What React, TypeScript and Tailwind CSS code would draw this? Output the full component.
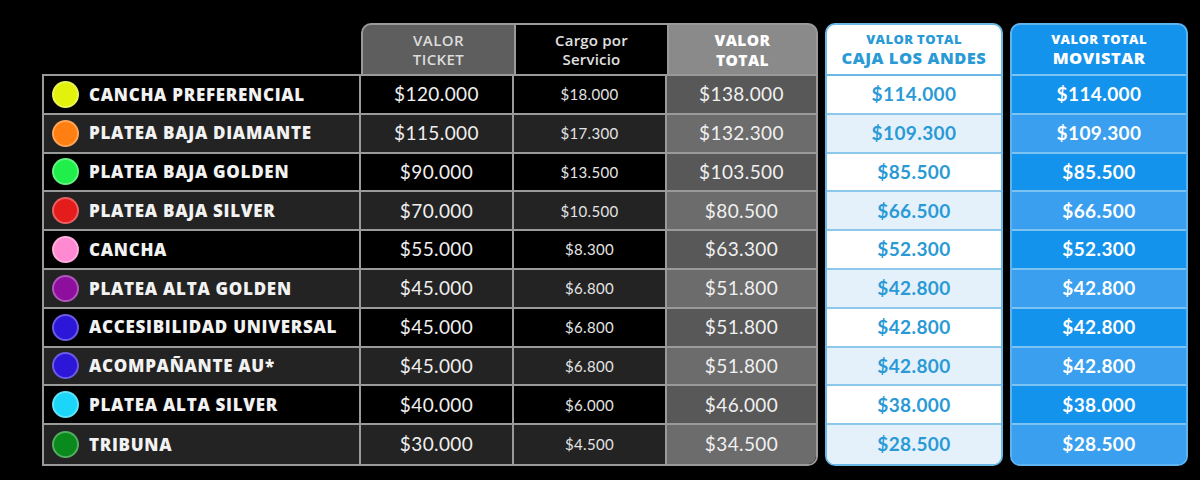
const rows = [
	{ name: "CANCHA PREFERENCIAL", dot: "#e2f20c", ticket: "$120.000", cargo: "$18.000", total: "$138.000", caja: "$114.000" },
	{ name: "PLATEA BAJA DIAMANTE", dot: "#ff7f12", ticket: "$115.000", cargo: "$17.300", total: "$132.300", caja: "$109.300" },
	{ name: "PLATEA BAJA GOLDEN", dot: "#20ee4a", ticket: "$90.000", cargo: "$13.500", total: "$103.500", caja: "$85.500" },
	{ name: "PLATEA BAJA SILVER", dot: "#e41c1c", ticket: "$70.000", cargo: "$10.500", total: "$80.500", caja: "$66.500" },
	{ name: "CANCHA", dot: "#ff8ad2", ticket: "$55.000", cargo: "$8.300", total: "$63.300", caja: "$52.300" },
	{ name: "PLATEA ALTA GOLDEN", dot: "#8e0f9e", ticket: "$45.000", cargo: "$6.800", total: "$51.800", caja: "$42.800" },
	{ name: "ACCESIBILIDAD UNIVERSAL", dot: "#2c16d8", ticket: "$45.000", cargo: "$6.800", total: "$51.800", caja: "$42.800" },
	{ name: "ACOMPAÑANTE AU*", dot: "#2c16d8", ticket: "$45.000", cargo: "$6.800", total: "$51.800", caja: "$42.800" },
	{ name: "PLATEA ALTA SILVER", dot: "#1cd6fa", ticket: "$40.000", cargo: "$6.000", total: "$46.000", caja: "$38.000" },
	{ name: "TRIBUNA", dot: "#0a8a1c", ticket: "$30.000", cargo: "$4.500", total: "$34.500", caja: "$28.500" },
];

const label = { fontFamily: '"Open Sans", "Liberation Sans", sans-serif' };
const price = { fontFamily: 'Lato, "Open Sans", sans-serif' };

export default function App() {
	return (
		<div className="flex h-[480px] w-[1200px] items-start gap-[7px] bg-black pl-[42px] pt-[23px]">
			{/* main table */}
			<div className="flex w-[776px] flex-col">
				<div className="flex h-[53px]">
					<div className="w-[319px] border-b-2 border-[#9a9a9a]" />
					<div
						className="flex w-[153px] flex-col items-center justify-center rounded-tl-[10px] border-2 border-r-0 border-[#9a9a9a] bg-[#5e5e5e] text-[15px] leading-[19px] font-semibold tracking-[0.4px] text-[#dcdcdc]"
						style={label}
					>
						<span>VALOR</span>
						<span>TICKET</span>
					</div>
					<div
						className="flex w-[153px] flex-col items-center justify-center border-2 border-r-0 border-[#9a9a9a] bg-black text-[15px] leading-[19px] font-semibold tracking-[0.2px] text-[#e0e0e0]"
						style={label}
					>
						<span>Cargo por</span>
						<span>Servicio</span>
					</div>
					<div
						className="flex w-[151px] flex-col items-center justify-center rounded-tr-[10px] border-2 border-[#9a9a9a] bg-[#8a8a8a] text-[15.5px] leading-[20px] font-extrabold tracking-[0.4px] text-white"
						style={label}
					>
						<span>VALOR</span>
						<span>TOTAL</span>
					</div>
				</div>
				<div className="flex flex-col overflow-hidden rounded-br-[10px] border-2 border-t-0 border-[#9a9a9a]">
					{rows.map((r, i) => {
						const odd = i % 2 === 1;
						return (
							<div
								key={i}
								className={`flex h-[38.8px] ${i < rows.length - 1 ? "border-b-2 border-[#9a9a9a]" : ""} ${odd ? "bg-[#232323]" : "bg-black"}`}
							>
								<div className="flex w-[317px] items-center gap-[10px] border-r-2 border-[#9a9a9a] pl-[8px]">
									<span
										className="h-[27px] w-[27px] shrink-0 rounded-full border-2 border-white/30"
										style={{ backgroundColor: r.dot }}
									/>
									<span className="text-[17px] font-extrabold tracking-[0.7px] text-[#f2f2f2]" style={label}>
										{r.name}
									</span>
								</div>
								<div
									className="flex w-[153px] items-center justify-center border-r-2 border-[#9a9a9a] text-[19px] tracking-[0.4px] text-[#efefef]"
									style={price}
								>
									{r.ticket}
								</div>
								<div
									className="flex w-[153px] items-center justify-center border-r-2 border-[#9a9a9a] text-[15px] tracking-[0.3px] text-[#e4e4e4]"
									style={price}
								>
									{r.cargo}
								</div>
								<div
									className={`flex flex-1 items-center justify-center text-[19px] tracking-[0.4px] text-[#f0f0f0] ${odd ? "bg-[#6c6c6c]" : "bg-[#585858]"}`}
									style={price}
								>
									{r.total}
								</div>
							</div>
						);
					})}
				</div>
			</div>

			{/* caja los andes */}
			<div className="flex w-[178px] flex-col overflow-hidden rounded-[10px] border-2 border-[#6ab8e6] bg-white">
				<div
					className="flex h-[51px] flex-col items-center justify-center border-b-2 border-[#6ab8e6] font-extrabold text-[#2a9ad6]"
					style={label}
				>
					<span className="text-[13px] leading-[17px] tracking-[0.4px]">VALOR TOTAL</span>
					<span className="text-[16.5px] leading-[20px] tracking-[0.5px]">CAJA LOS ANDES</span>
				</div>
				{rows.map((r, i) => (
					<div
						key={i}
						className={`flex h-[38.8px] items-center justify-center text-[19px] font-bold tracking-[0.4px] text-[#2a9ad6] ${i < rows.length - 1 ? "border-b-2 border-[#8cc8ec]" : ""} ${i % 2 === 1 ? "bg-[#e4f1fb]" : "bg-white"}`}
						style={price}
					>
						{r.caja}
					</div>
				))}
			</div>

			{/* movistar */}
			<div className="flex w-[178px] flex-col overflow-hidden rounded-[10px] border-2 border-[#5fb4f0] bg-[#1493ec]">
				<div
					className="flex h-[51px] flex-col items-center justify-center border-b-2 border-[#7cc2f2] font-extrabold text-white"
					style={label}
				>
					<span className="text-[13px] leading-[17px] tracking-[0.4px]">VALOR TOTAL</span>
					<span className="text-[16.5px] leading-[20px] tracking-[0.5px]">MOVISTAR</span>
				</div>
				{rows.map((r, i) => (
					<div
						key={i}
						className={`flex h-[38.8px] items-center justify-center text-[19px] font-bold tracking-[0.4px] text-white ${i < rows.length - 1 ? "border-b-2 border-[#7cc2f2]" : ""} ${i % 2 === 1 ? "bg-[#3a9fef]" : "bg-[#1493ec]"}`}
						style={price}
					>
						{r.caja}
					</div>
				))}
			</div>
		</div>
	);
}
